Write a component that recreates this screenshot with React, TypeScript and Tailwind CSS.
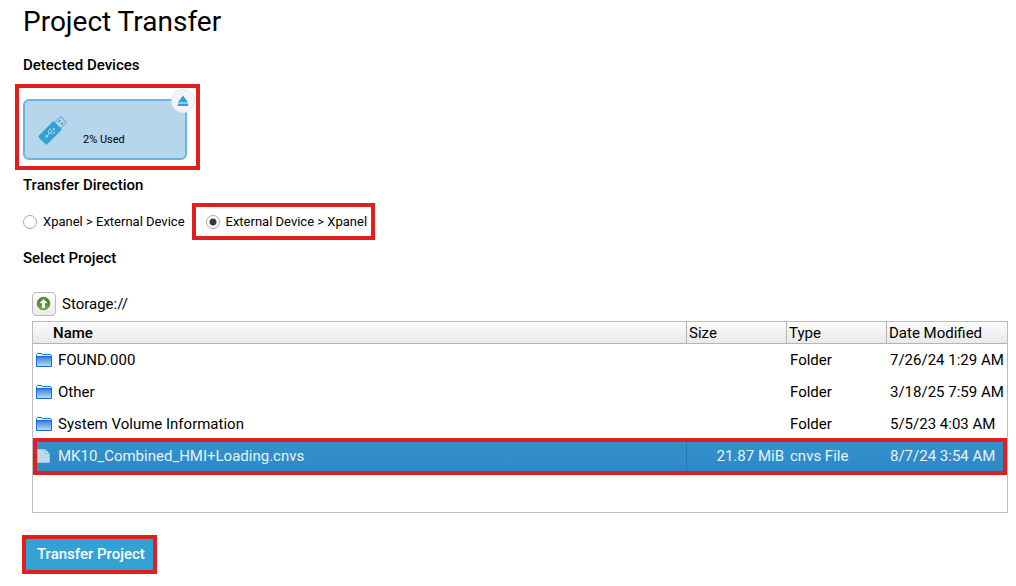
import React, { useState } from 'react';

interface FileEntry {
  name: string;
  size?: string;
  type: string;
  modified: string;
}

const files: FileEntry[] = [
  { name: 'FOUND.000', type: 'Folder', modified: '7/26/24 1:29 AM' },
  { name: 'Other', type: 'Folder', modified: '3/18/25 7:59 AM' },
  { name: 'System Volume Information', type: 'Folder', modified: '5/5/23 4:03 AM' },
  { name: 'MK10_Combined_HMI+Loading.cnvs', size: '21.87 MiB', type: 'cnvs File', modified: '8/7/24 3:54 AM' },
];

const directions = [
  { id: 'export', label: 'Xpanel > External Device' },
  { id: 'import', label: 'External Device > Xpanel' },
];

const UsbIcon = () => (
  <svg width="30" height="30" viewBox="0 0 30 30" fill="none" className="mb-0.5" aria-hidden="true">
    <g transform="rotate(45 15 15)">
      <rect x="11" y="-1.5" width="8" height="9" fill="#b5d6eb" stroke="#5fb1da" strokeWidth="1" />
      <rect x="12.5" y="1.5" width="1.6" height="2.4" fill="#31a2d3" />
      <rect x="16" y="1.5" width="1.6" height="2.4" fill="#31a2d3" />
      <path d="M9 7h12v20.5a1.5 1.5 0 0 1-1.5 1.5h-9A1.5 1.5 0 0 1 9 27.5z" fill="#31a2d3" />
      <path d="M15 12v10M15 19.5l-2.5-2v-2M15 18l2.5-1.5v-2" stroke="#a5d3ec" strokeWidth="0.9" />
      <path d="M15 10.8l-1.4 2.2h2.8z" fill="#a5d3ec" />
      <circle cx="15" cy="22.3" r="1.4" fill="#a5d3ec" />
      <circle cx="12.5" cy="15.2" r="0.9" fill="#a5d3ec" />
      <rect x="16.7" y="13.6" width="1.6" height="1.6" fill="#a5d3ec" />
    </g>
  </svg>
);

const EjectIcon = () => (
  <svg width="12" height="12" viewBox="0 0 12 12" fill="#31a2d3" aria-hidden="true">
    <path d="M6 0.5 11.2 7.5H0.8z" />
    <rect x="0.8" y="8.5" width="10.4" height="2.5" />
  </svg>
);

const UpIcon = () => (
  <svg width="16" height="16" viewBox="0 0 16 16" aria-hidden="true">
    <defs>
      <linearGradient id="up-fill" x1="0" y1="0" x2="0" y2="1">
        <stop offset="0" stopColor="#4f8f2c" />
        <stop offset="0.5" stopColor="#4a8c25" />
        <stop offset="1" stopColor="#82b84c" />
      </linearGradient>
    </defs>
    <circle cx="7.5" cy="7.5" r="6.3" fill="url(#up-fill)" stroke="#4a7f33" strokeWidth="0.8" />
    <path d="M7.5 3 11.7 7.3H9v4.4H6V7.3H3.3z" fill="#fff" />
  </svg>
);

const FolderIcon = () => (
  <svg width="16" height="16" viewBox="0 0 16 16" aria-hidden="true">
    <defs>
      <linearGradient id="folder-fill" x1="0" y1="0" x2="0" y2="1">
        <stop offset="0" stopColor="#3c82d8" />
        <stop offset="1" stopColor="#b4dafa" />
      </linearGradient>
    </defs>
    <path d="M0.5 14.5v-12l1-1h4l1 1h8l1 1v11z" fill="#e3f1fc" stroke="#1b70d0" />
    <rect x="1" y="5" width="14" height="9" fill="url(#folder-fill)" />
    <path d="M0.5 4.5h15M0.5 14.5h15" stroke="#1b6cca" />
  </svg>
);

const FileIcon = () => (
  <svg width="16" height="16" viewBox="0 0 16 16" aria-hidden="true">
    <path d="M1.5 1.5h8l4 4v9h-12z" fill="#bdd9ec" stroke="#9cc5e1" />
    <path d="M9.5 1.5v4h4z" fill="#e3f0f8" stroke="#7fb0d3" strokeWidth="0.8" />
  </svg>
);

const SectionTitle: React.FC<{ children: React.ReactNode }> = ({ children }) => (
  <h2 className="text-[15px] leading-5 font-medium">{children}</h2>
);

const DeviceCard = () => (
  <div className="relative flex w-[164px] items-end gap-4 rounded-md border-2 border-[#6bb5dc] bg-[#b5d6eb] px-3 pt-[15px] pb-2.5">
    <UsbIcon />
    <span className="text-[11px] leading-4">2% Used</span>
    <button
      type="button"
      aria-label="Eject"
      className="absolute -top-3 -right-2.5 flex size-6 items-center justify-center rounded-full border border-[#e0e5ec] bg-[#f3f5f9]"
    >
      <EjectIcon />
    </button>
  </div>
);

export default function App() {
  const [direction, setDirection] = useState('import');
  const [selected, setSelected] = useState('MK10_Combined_HMI+Loading.cnvs');

  return (
    <main className="bg-white pt-1 pr-2 pl-[23px] font-[Roboto,sans-serif] text-black">
      <h1 className="text-[28px] leading-9">Project Transfer</h1>

      <section className="mt-[15px]">
        <SectionTitle>Detected Devices</SectionTitle>
        <div className="mt-[9px] -ml-2 w-fit border-4 border-[#e02020] pt-[11px] pr-[9px] pb-1.5 pl-1">
          <DeviceCard />
        </div>
      </section>

      <section className="mt-[5px]">
        <SectionTitle>Transfer Direction</SectionTitle>
        <div className="mt-2 flex items-center gap-[7px]">
          {directions.map((dir) => (
            <label
              key={dir.id}
              className={`flex items-center gap-1.5 text-[13px] leading-5 ${
                direction === dir.id ? 'border-4 border-[#e02020] pt-[5px] pr-1 pb-1 pl-2.5' : ''
              }`}
            >
              <input
                type="radio"
                name="direction"
                checked={direction === dir.id}
                onChange={() => setDirection(dir.id)}
                className="size-3.5 appearance-none rounded-full border border-[#a8a8a8] bg-white checked:bg-[radial-gradient(circle,#3a3a3a_3px,#fff_4px)]"
              />
              {dir.label}
            </label>
          ))}
        </div>
      </section>

      <section className="mt-2">
        <SectionTitle>Select Project</SectionTitle>
        <div className="mt-6 ml-[9px]">
          <div className="flex items-center gap-1.5 text-[15px] leading-5">
            <button
              type="button"
              aria-label="Up one folder"
              className="flex size-6 items-center justify-center rounded-sm border border-[#bbb] bg-linear-to-b from-white to-[#e9e9e9]"
            >
              <UpIcon />
            </button>
            Storage://
          </div>

          <div className="mt-[5px] border border-[#bdbdbd] pb-10 text-[15px] leading-5">
            <table className="w-full table-fixed border-separate border-spacing-0">
              <thead className="bg-linear-to-b from-[#fbfbfb] to-[#e8e8e8]">
                <tr className="h-[22px] text-left [&>th]:border-b [&>th]:border-[#b5b5b5] [&>th]:p-0 [&>th]:font-normal">
                  <th>
                    <span className="pl-5 font-medium">Name</span>
                  </th>
                  <th className="w-[100px] border-l">
                    <span className="pl-0.5">Size</span>
                  </th>
                  <th className="w-[100px] border-l">
                    <span className="pl-0.5">Type</span>
                  </th>
                  <th className="w-[121px] border-l">
                    <span className="pl-0.5">Date Modified</span>
                  </th>
                </tr>
              </thead>
              <tbody>
                {files.map((file) => (
                  <tr
                    key={file.name}
                    onClick={() => setSelected(file.name)}
                    className={`h-8 [&>td]:p-0 ${
                      selected === file.name
                        ? 'relative bg-linear-to-b from-[#3492cb] to-[#2d89c4] text-[#e6f3fb]'
                        : ''
                    }`}
                  >
                    <td>
                      <div className="flex items-center gap-1.5 pl-[3px]">
                        {file.type === 'Folder' ? <FolderIcon /> : <FileIcon />}
                        {file.name}
                      </div>
                      {selected === file.name && (
                        <div className="pointer-events-none absolute inset-x-0 -top-0.5 -bottom-[3px] border-4 border-[#e02020]" />
                      )}
                    </td>
                    <td className={selected === file.name ? 'border-l border-[#2779b0]' : ''}>
                      <div className="pr-0.5 text-right">{file.size}</div>
                    </td>
                    <td>
                      <div className="pl-1">{file.type}</div>
                    </td>
                    <td>
                      <div className="pl-1 whitespace-nowrap">{file.modified}</div>
                    </td>
                  </tr>
                ))}
              </tbody>
            </table>
          </div>
        </div>
      </section>

      <button
        type="button"
        className="mt-[22px] -ml-px border-4 border-[#e02020] bg-[#31a2d3] pt-[5px] pr-2 pb-1.5 pl-[11px] text-[15px] leading-5 font-medium text-white"
      >
        Transfer Project
      </button>
    </main>
  );
}
